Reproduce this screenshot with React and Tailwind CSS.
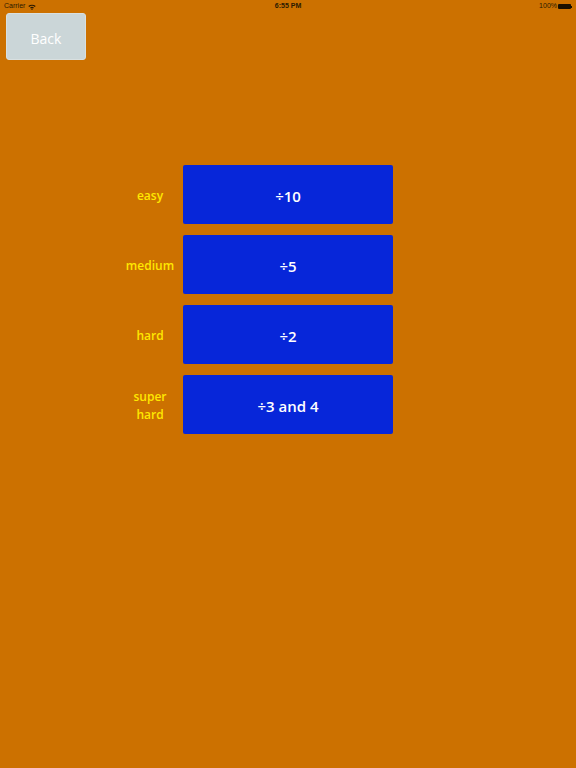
import React from "react";

const rows = [
  { label: "easy", text: "÷10" },
  { label: "medium", text: "÷5" },
  { label: "hard", text: "÷2" },
  { label: "super hard", text: "÷3 and 4" },
];

function Wifi() {
  return (
    <svg width="8" height="6" viewBox="0 0 8 6" className="ml-[3px]">
      <path d="M0.3 2.1 A5.5 5.5 0 0 1 7.7 2.1 L6.8 3 A4.2 4.2 0 0 0 1.2 3 Z" fill="#2a1a00" />
      <path d="M2 3.7 A3 3 0 0 1 6 3.7 L5.1 4.6 A1.8 1.8 0 0 0 2.9 4.6 Z" fill="#2a1a00" />
      <circle cx="4" cy="5.4" r="0.6" fill="#2a1a00" />
    </svg>
  );
}

export default function App() {
  return (
    <div
      className="w-[576px] h-[768px] bg-[#cc7100] flex flex-col"
      style={{ fontFamily: '"Open Sans", "Noto Sans", sans-serif' }}
    >
      <div className="h-[13px] flex items-center justify-between px-[4px] text-[7px] text-[#2a1a00] relative" style={{ fontFamily: '"Liberation Sans", sans-serif' }}>
        <div className="flex items-center">
          <span>Carrier</span>
          <Wifi />
        </div>
        <span className="absolute left-1/2 -translate-x-1/2 font-bold">6:55 PM</span>
        <div className="flex items-center gap-[1px]">
          <span>100%</span>
          <div className="flex items-center">
            <div className="w-[13px] h-[5px] bg-[#1a1000] rounded-[1px]" />
            <div className="w-[1px] h-[2px] bg-[#1a1000]" />
          </div>
        </div>
      </div>
      <div className="pl-[6px]">
        <button className="w-[80px] h-[47px] bg-[#cbd6d8] border border-[#d9e0e0] rounded-[3px] text-white text-[14px] font-medium flex items-center justify-center pt-[3px]">
          Back
        </button>
      </div>
      <div className="mt-[105px] pl-[122px] flex flex-col gap-[11px]">
        {rows.map((r) => (
          <div key={r.label} className="flex items-center gap-[5px]">
            <div className="w-[56px] text-center text-[12px] leading-[18px] font-semibold text-[#ffe800] pt-[3px]">
              {r.label}
            </div>
            <div className="w-[210px] h-[59px] bg-[#0726d9] rounded-[2px] flex items-center justify-center text-white text-[15px] font-semibold pt-[3px]">
              {r.text}
            </div>
          </div>
        ))}
      </div>
    </div>
  );
}
